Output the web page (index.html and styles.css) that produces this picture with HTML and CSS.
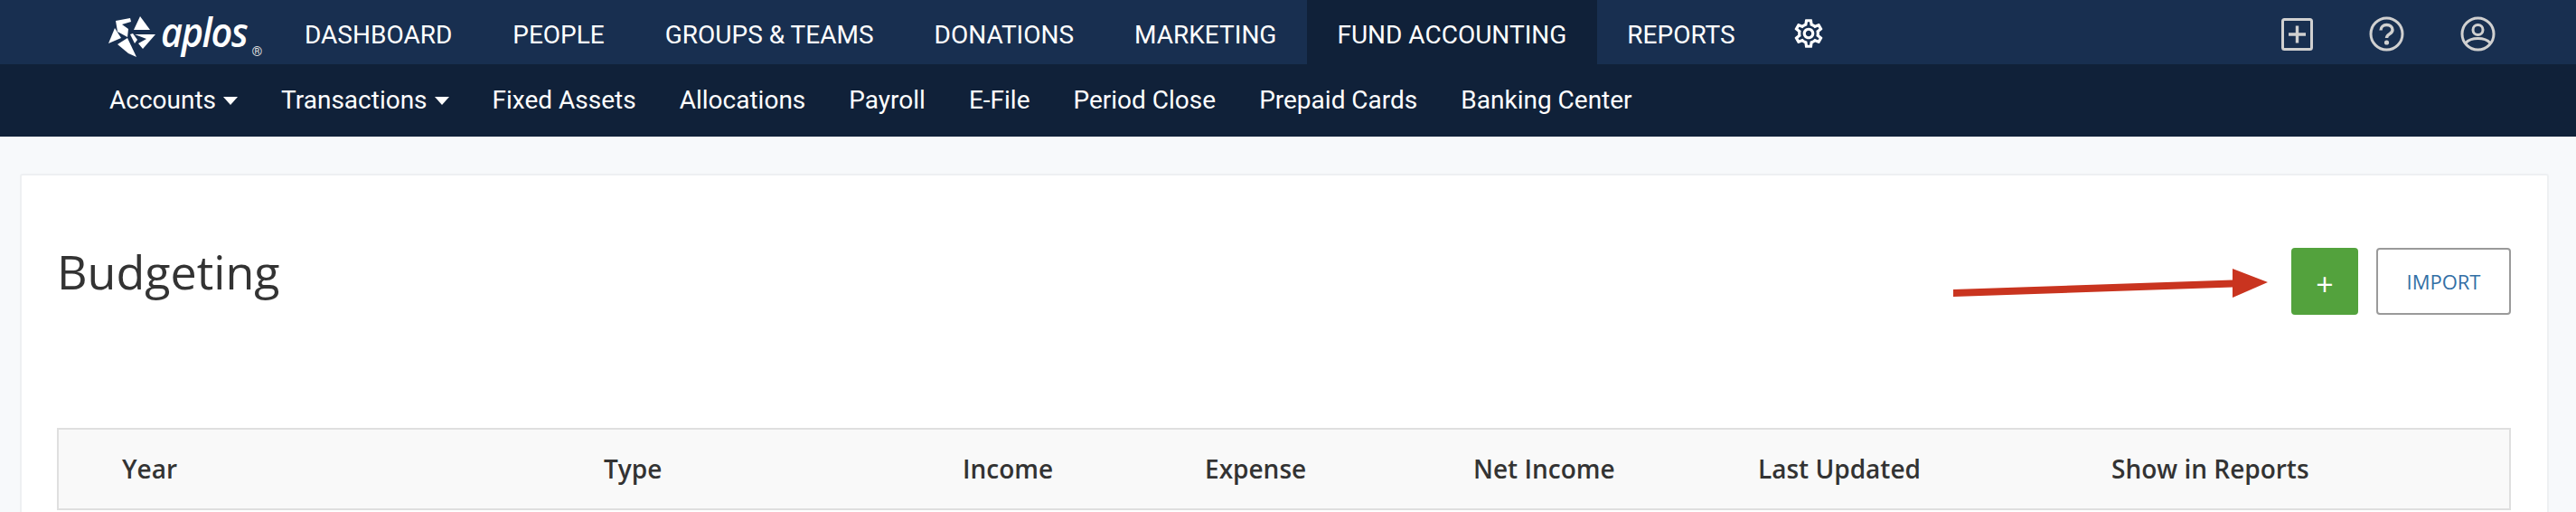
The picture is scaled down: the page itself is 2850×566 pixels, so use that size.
FILE: index.html
```html
<!DOCTYPE html>
<html lang="en">
<head>
<meta charset="utf-8">
<title>Budgeting</title>
<link rel="stylesheet" href="styles.css">
</head>
<body>
<header class="masthead">
  <div class="topbar">
    <a class="logo">
      <svg class="logo-star" viewBox="0 0 52 45" width="52" height="45"><g fill="#fff">
        <polygon points="8,5 24,2 25,6 15,9 22,14 21,23 10,17"/>
        <polygon points="35,0 46,15 28,15"/>
        <polygon points="7,13 14,24 0,30"/>
        <polygon points="29,20 52,20 38,36 33,30 42,25"/>
        <polygon points="10,31 21,24 31,45 22,41"/>
        <polygon points="24,20 27,19 32,26 29,30"/>
      </g></svg>
      <span class="logo-word">aplos</span><span class="logo-reg">®</span>
    </a>
    <nav class="mainnav">
      <a class="mainlink">DASHBOARD</a>
      <a class="mainlink">PEOPLE</a>
      <a class="mainlink">GROUPS &amp; TEAMS</a>
      <a class="mainlink">DONATIONS</a>
      <a class="mainlink">MARKETING</a>
      <a class="mainlink active">FUND ACCOUNTING</a>
      <a class="mainlink">REPORTS</a>
      <a class="mainlink gear">
        <svg viewBox="0 0 24 24" width="38" height="38" fill="#fff"><path d="M19.43 12.98c.04-.32.07-.64.07-.98 0-.34-.03-.66-.07-.98l2.11-1.65c.19-.15.24-.42.12-.64l-2-3.46c-.09-.16-.26-.25-.44-.25-.06 0-.12.01-.17.03l-2.49 1c-.52-.4-1.08-.73-1.69-.98l-.38-2.65C14.46 2.18 14.25 2 14 2h-4c-.25 0-.46.18-.49.42l-.38 2.65c-.61.25-1.17.59-1.69.98l-2.49-1c-.06-.02-.12-.03-.18-.03-.17 0-.34.09-.43.25l-2 3.46c-.13.22-.07.49.12.64l2.11 1.65c-.04.32-.07.65-.07.98 0 .33.03.66.07.98l-2.11 1.65c-.19.15-.24.42-.12.64l2 3.46c.09.16.26.25.44.25.06 0 .12-.01.17-.03l2.49-1c.52.4 1.08.73 1.69.98l.38 2.65c.03.24.24.42.49.42h4c.25 0 .46-.18.49-.42l.38-2.65c.61-.25 1.17-.59 1.69-.98l2.49 1c.06.02.12.03.18.03.17 0 .34-.09.43-.25l2-3.46c.12-.22.07-.49-.12-.64l-2.11-1.65zm-1.98-1.71c.04.31.05.52.05.73 0 .21-.02.43-.05.73l-.14 1.13.89.7 1.08.84-.7 1.21-1.27-.51-1.04-.42-.9.68c-.43.32-.84.56-1.25.73l-1.06.43-.16 1.13-.2 1.35h-1.4l-.19-1.35-.16-1.13-1.06-.43c-.43-.18-.83-.41-1.23-.71l-.91-.7-1.06.43-1.27.51-.7-1.21 1.08-.84.89-.7-.14-1.13c-.03-.31-.05-.54-.05-.74s.02-.43.05-.73l.14-1.13-.89-.7-1.08-.84.7-1.21 1.27.51 1.04.42.9-.68c.43-.32.84-.56 1.25-.73l1.06-.43.16-1.13.2-1.35h1.39l.19 1.35.16 1.13 1.06.43c.43.18.83.41 1.23.71l.91.7 1.06-.43 1.27-.51.7 1.21-1.07.85-.89.7.14 1.13zM12 8c-2.21 0-4 1.79-4 4s1.79 4 4 4 4-1.79 4-4-1.79-4-4-4zm0 6c-1.1 0-2-.9-2-2s.9-2 2-2 2 .9 2 2-.9 2-2 2z"/></svg>
      </a>
    </nav>
    <div class="tools">
      <svg viewBox="0 0 35 36" width="35" height="36" fill="none" stroke="#d0d0d0" stroke-width="3"><rect x="1.5" y="1.500" width="32" height="33" rx="2"/><path d="M17.500 8.500v19M8 18h19" stroke-width="3.400"/></svg>
      <svg viewBox="0 0 39 39" width="39" height="39" fill="none" stroke="#d0d0d0" stroke-width="3"><circle cx="19.500" cy="19.500" r="17.500"/><path d="M13 15.500c0-3.600 2.800-6 6.500-6s6.500 2.300 6.500 5.500c0 4.800-6.500 4.500-6.500 9" stroke-width="3.400"/><circle cx="19.500" cy="29" r="2.600" fill="#d0d0d0" stroke="none"/></svg>
      <svg viewBox="0 0 39 39" width="39" height="39" fill="none" stroke="#d0d0d0" stroke-width="3"><circle cx="19.500" cy="19.500" r="17.500"/><circle cx="19.500" cy="15" r="5.500"/><path d="M6 29.500c3-3.500 8-5 13.500-5s10.500 1.500 13.500 5"/></svg>
    </div>
  </div>
  <nav class="subnav">
    <a class="sublink">Accounts<i class="caret"></i></a>
    <a class="sublink">Transactions<i class="caret"></i></a>
    <a class="sublink">Fixed Assets</a>
    <a class="sublink">Allocations</a>
    <a class="sublink">Payroll</a>
    <a class="sublink">E-File</a>
    <a class="sublink">Period Close</a>
    <a class="sublink">Prepaid Cards</a>
    <a class="sublink">Banking Center</a>
  </nav>
</header>
<main class="panel">
  <div class="head">
    <h1 class="title">Budgeting</h1>
    <div class="actions">
      <button class="btn btn-add">+</button>
      <button class="btn btn-import">IMPORT</button>
    </div>
  </div>
  <div class="table-head">
    <span class="col col-year">Year</span>
    <span class="col col-type">Type</span>
    <span class="col col-income">Income</span>
    <span class="col col-expense">Expense</span>
    <span class="col col-net">Net Income</span>
    <span class="col col-updated">Last Updated</span>
    <span class="col col-show">Show in Reports</span>
  </div>
</main>
<svg class="arrow" viewBox="0 0 350 34" width="350" height="34"><polygon fill="#c9341f" points="1,23 310,12.500 310,0 349,15 310,32 310,20.500 1,31"/></svg>
</body>
</html>
```
FILE: styles.css
```css
* { box-sizing: border-box; }
html, body { margin: 0; height: 566px; overflow: hidden; }
body { background: #f7f9fb; font-family: "Open Sans", sans-serif; color: #333; }
a { color: inherit; text-decoration: none; }

.masthead { color: #fff; font-family: Roboto, sans-serif; }
.topbar { height: 71px; background: #182f50; display: flex; align-items: stretch; padding-left: 120px; }
.logo { display: flex; align-items: flex-start; width: 183.500px; flex: none; padding-top: 18px; }
.logo-star { flex: none; }
.logo-word { font-family: "Open Sans", sans-serif; font-style: italic; font-size: 46px; line-height: 32px; margin-left: 6px; letter-spacing: -1.500px; font-weight: 600; transform: scaleX(0.9); transform-origin: left center; }
.logo-reg { font-size: 15px; line-height: 13px; margin: 33px 0 0 -5.500px; color: #ddd; }
.mainnav { display: flex; flex: 1; }
.mainlink { display: flex; align-items: center; padding: 5px 33.500px 0; font-size: 28px; white-space: nowrap; }
.mainlink.active { background: #102139; }
.gear { padding: 3px 0 0 29px; }
.tools { display: flex; align-items: center; gap: 62px; padding: 4px 89px 0 0; }

.subnav { height: 80px; background: #102139; display: flex; align-items: center; gap: 48px; padding: 0 0 2px 121px; }
.sublink { font-size: 28px; white-space: nowrap; display: flex; align-items: center; }
.caret { width: 0; height: 0; margin: 2px 0 0 8px; border-left: 8px solid transparent; border-right: 8px solid transparent; border-top: 9px solid #fff; }

.panel { margin: 41px 30px 0 22px; background: #fff; border: 2px solid #eef0f2; border-radius: 3px; padding: 0 40px 0 39px; height: 400px; }
.head { display: flex; justify-content: space-between; align-items: flex-start; height: 279px; padding-top: 80px; }
.title { margin: -9px 0 0; font-size: 52px; font-weight: 400; line-height: 70px; }
.actions { display: flex; gap: 20px; }
.btn { height: 74px; border-radius: 4px; font-family: "Open Sans", sans-serif; }
.btn-add { width: 74px; background: #53a23d; border: none; color: #fff; font-size: 34px; font-weight: 400; padding-top: 6px; }
.btn-import { width: 149px; background: #fff; border: 2px solid #9a9a9a; color: #336fa5; font-size: 22px; }
.table-head { height: 91px; background: #f9f9f9; border: 2px solid #dfdfdf; position: relative; }
.col { position: absolute; top: 24px; font-size: 28px; font-weight: 600; line-height: 38px; white-space: nowrap; }
.col-year { left: 70px; }
.col-type { left: 603px; }
.col-income { left: 1000px; }
.col-expense { left: 1268px; }
.col-net { left: 1565px; }
.col-updated { left: 1880px; }
.col-show { left: 2271px; }
.arrow { position: absolute; left: 2160px; top: 297px; }
```
